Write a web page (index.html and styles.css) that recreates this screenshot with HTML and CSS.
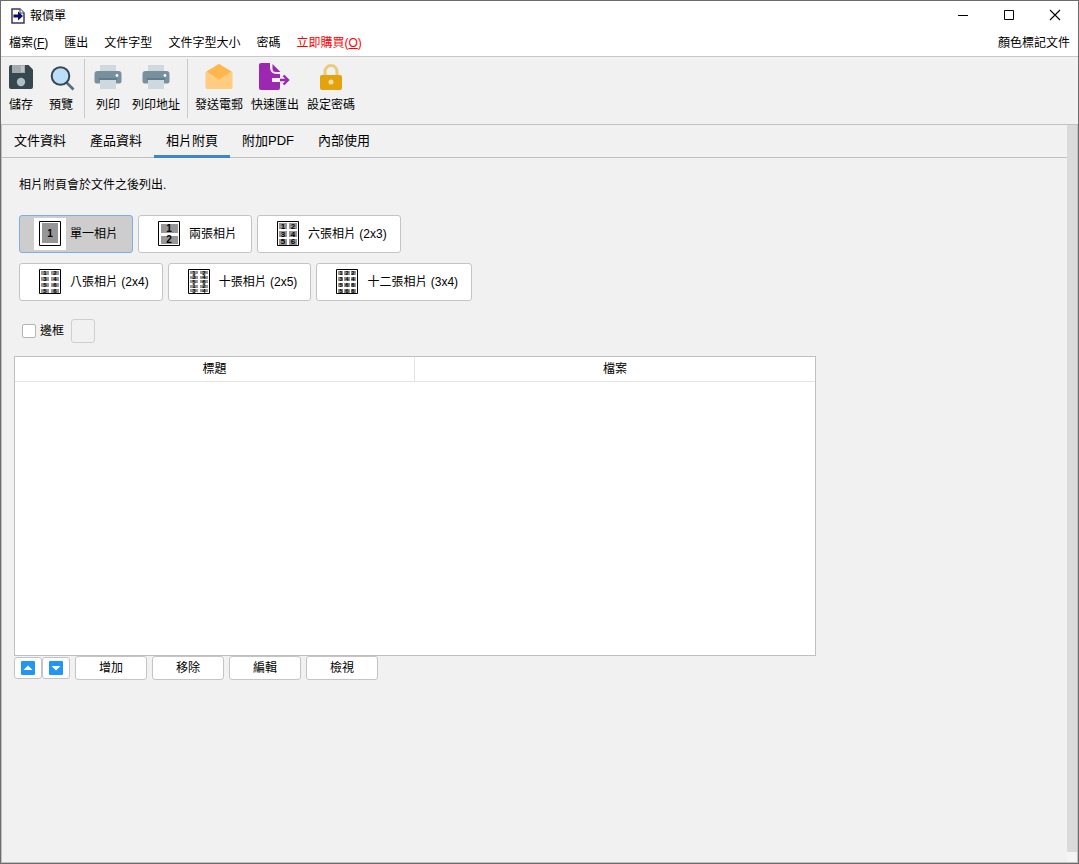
FILE: index.html
```html
<!DOCTYPE html>
<html lang="zh-Hant">
<head>
<meta charset="utf-8">
<title>報價單</title>
<link rel="stylesheet" href="styles.css">
</head>
<body>
<div class="window">
  <header class="titlebar">
    <svg class="app-icon" width="14" height="16" viewBox="0 0 14 16"><path d="M1 1h8l4 4v10H1z" fill="#ffffd8" stroke="#38386c" stroke-width="1.5"/><path d="M9 1v4h4" fill="#fff" stroke="#38386c"/><path d="M2.500 6.500H7V3.500l5 4.500-5 4.500V9.500H2.500z" fill="#0a0a78"/></svg>
    <h1 class="title">報價單</h1>
    <div class="window-controls">
      <button class="control" aria-label="最小化"><svg width="12" height="12" viewBox="0 0 12 12"><path d="M1 6.500h10" stroke="#000"/></svg></button>
      <button class="control" aria-label="最大化"><svg width="12" height="12" viewBox="0 0 12 12"><path d="M1.500 1.500h9v9h-9z" fill="none" stroke="#000"/></svg></button>
      <button class="control" aria-label="關閉"><svg width="12" height="12" viewBox="0 0 12 12"><path d="M1 1l10 10M11 1L1 11" stroke="#000" stroke-width="1.100"/></svg></button>
    </div>
  </header>

  <nav class="menubar">
    <button class="menu">檔案(<u>F</u>)</button>
    <button class="menu">匯出</button>
    <button class="menu">文件字型</button>
    <button class="menu">文件字型大小</button>
    <button class="menu">密碼</button>
    <button class="menu menu-buy">立即購買(<u>O</u>)</button>
    <button class="menu menu-end">顏色標記文件</button>
  </nav>

  <div class="toolbar" role="toolbar">
    <div class="tools tools-file">
      <button class="tool"><svg width="24" height="26" viewBox="0 0 24 26"><path d="M2 1h17.500L24 5.500V23a2 2 0 0 1-2 2H2a2 2 0 0 1-2-2V3a2 2 0 0 1 2-2z" fill="#37474f"/><path d="M3 1h13v8H3z" fill="#a3abb0"/><path d="M12 2h3v6h-3z" fill="#bcc4c8"/><circle cx="12" cy="18" r="4.200" fill="#b0bec5"/></svg>儲存</button>
      <button class="tool"><svg class="lens" width="24" height="26" viewBox="1 0 24 26"><path d="M17 17l8.500 8.500" stroke="#546e7a" stroke-width="2.600"/><circle cx="12.500" cy="12" r="8.800" fill="#bbdefb" stroke="#37474f" stroke-width="2"/></svg>預覽</button>
    </div>
    <div class="tools tools-print">
      <button class="tool"><svg width="28" height="26" viewBox="0 0 28 26"><path d="M6 1h16v7H6z" fill="#cfd8dc"/><path d="M3.500 7h21a3 3 0 0 1 3 3v7.500a2 2 0 0 1-2 2h-23a2 2 0 0 1-2-2V10a3 3 0 0 1 3-3z" fill="#78909c"/><path d="M6 15.500h16V25H6z" fill="#cfd8dc"/><path d="M5 14h18v2H5z" fill="#607d8b"/><circle cx="23" cy="11.500" r="1.400" fill="#e8fcff"/></svg>列印</button>
      <button class="tool"><svg width="28" height="26" viewBox="0 0 28 26"><path d="M6 1h16v7H6z" fill="#cfd8dc"/><path d="M3.500 7h21a3 3 0 0 1 3 3v7.500a2 2 0 0 1-2 2h-23a2 2 0 0 1-2-2V10a3 3 0 0 1 3-3z" fill="#78909c"/><path d="M6 15.500h16V25H6z" fill="#cfd8dc"/><path d="M5 14h18v2H5z" fill="#607d8b"/><circle cx="23" cy="11.500" r="1.400" fill="#e8fcff"/></svg>列印地址</button>
    </div>
    <div class="tools tools-send">
      <button class="tool"><svg width="28" height="26" viewBox="0 0 28 26"><path d="M14 0L27 8a2 2 0 0 1 .500 1.500V23a2 2 0 0 1-2 2h-23a2 2 0 0 1-2-2V9.500A2 2 0 0 1 1 8z" fill="#ffcc80"/><path d="M14 0l12.500 7.500L14 15.500 1.500 7.500z" fill="#ffb74d"/></svg>發送電郵</button>
      <button class="tool"><svg width="32" height="28" viewBox="0 0 32 28"><path d="M2 0h9v5a6 6 0 0 0 6 6h4v4h-8v4h8v6a2 2 0 0 1-2 2H2a2 2 0 0 1-2-2V2a2 2 0 0 1 2-2z" fill="#9c27b0"/><path d="M13.500 1l8 8H17a3.500 3.500 0 0 1-3.500-3.500z" fill="#9c27b0"/><path d="M21 17h8M24.500 12.500L29 17l-4.500 4.500" fill="none" stroke="#9c27b0" stroke-width="2.400"/></svg>快速匯出</button>
      <button class="tool"><svg width="24" height="28" viewBox="0 0 24 28"><path d="M6 13V8.500a6 6 0 0 1 12 0V13" fill="none" stroke="#eacb7a" stroke-width="3"/><rect x="1" y="12" width="22" height="15" rx="2" fill="#e2a30d"/><circle cx="12" cy="19" r="2.500" fill="#ffe0a0"/></svg>設定密碼</button>
    </div>
  </div>

  <main class="pane">
    <div class="page">
      <div class="tabs" role="tablist">
        <button class="tab" role="tab">文件資料</button>
        <button class="tab" role="tab">產品資料</button>
        <button class="tab tab-active" role="tab" aria-selected="true">相片附頁</button>
        <button class="tab" role="tab">附加PDF</button>
        <button class="tab" role="tab">內部使用</button>
      </div>

      <section class="content">
        <p class="note">相片附頁會於文件之後列出.</p>
        <div class="layouts">
          <div class="layout-row">
            <button class="layout layout-selected" aria-pressed="true"><svg class="thumb" viewBox="0 0 32 32"><path class="frame" d="M5.500 3.500h21v24h-21z"/><path class="cell" d="M8 5h16v20H8z"/><text class="digit" x="16" y="19">1</text></svg>單一相片</button>
            <button class="layout"><svg class="thumb" viewBox="0 0 32 32"><path class="frame" d="M5.500 3.500h21v24h-21z"/><path class="cell" d="M8 6h17v9H8zM8 18h17v8H8z"/><text class="digit" x="16" y="14">1</text><text class="digit" x="16" y="25">2</text></svg>兩張相片</button>
            <button class="layout"><svg class="thumb" viewBox="0 0 32 32"><path class="frame" d="M5.500 3.500h21v24h-21z"/><path class="cell" d="M7 5h8v6H7zM17 5h8v6h-8zM7 13h8v6H7zM17 13h8v6h-8zM7 21h8v6H7zM17 21h8v6h-8z"/><text class="digit small" x="11" y="11">1</text><text class="digit small" x="21" y="11">2</text><text class="digit small" x="11" y="19">3</text><text class="digit small" x="21" y="19">4</text><text class="digit small" x="11" y="26">5</text><text class="digit small" x="21" y="26">6</text></svg>六張相片 (2x3)</button>
          </div>
          <div class="layout-row">
            <button class="layout"><svg class="thumb" viewBox="0 0 32 32"><path class="frame" d="M5.500 3.500h21v24h-21z"/><path class="cell" d="M7 5h8v4H7zM17 5h8v4h-8zM7 11h8v4H7zM17 11h8v4h-8zM7 17h8v4H7zM17 17h8v4h-8zM7 23h8v4H7zM17 23h8v4h-8z"/><g class="digit tiny"><text x="11" y="9">1</text><text x="21" y="9">2</text><text x="11" y="15">3</text><text x="21" y="15">4</text><text x="11" y="21">5</text><text x="21" y="21">6</text><text x="11" y="27">5</text><text x="21" y="27">6</text></g></svg>八張相片 (2x4)</button>
            <button class="layout"><svg class="thumb" viewBox="0 0 32 32"><path class="frame" d="M5.500 3.500h21v24h-21z"/><path class="cell" d="M7 5h8v3H7zM17 5h8v3h-8zM7 10h8v3H7zM17 10h8v3h-8zM7 14h8v3H7zM17 14h8v3h-8zM7 19h8v3H7zM17 19h8v3h-8zM7 23h8v3H7zM17 23h8v3h-8z"/><g class="digit tiny"><text x="11" y="9">1</text><text x="21" y="9">2</text><text x="11" y="13">3</text><text x="21" y="13">4</text><text x="11" y="18">5</text><text x="21" y="18">6</text><text x="11" y="22">1</text><text x="21" y="22">2</text><text x="11" y="27">3</text><text x="21" y="27">4</text></g></svg>十張相片 (2x5)</button>
            <button class="layout"><svg class="thumb" viewBox="0 0 32 32"><path class="frame" d="M5.500 3.500h21v24h-21z"/><path class="cell" d="M7 5h5v4H7zM13 5h6v4h-6zM20 5h5v4h-5zM7 11h5v4H7zM13 11h6v4h-6zM20 11h5v4h-5zM7 17h5v4H7zM13 17h6v4h-6zM20 17h5v4h-5zM7 23h5v4H7zM13 23h6v4h-6zM20 23h5v4h-5z"/><g class="digit tiny"><text x="10" y="9">1</text><text x="16" y="9">2</text><text x="22" y="9">2</text><text x="10" y="15">3</text><text x="16" y="15">4</text><text x="22" y="15">4</text><text x="10" y="21">5</text><text x="16" y="21">6</text><text x="22" y="21">6</text><text x="10" y="27">5</text><text x="16" y="27">6</text><text x="22" y="27">6</text></g></svg>十二張相片 (3x4)</button>
          </div>
        </div>

        <div class="border-option">
          <input class="check" type="checkbox" id="border"><label for="border">邊框</label>
          <button class="swatch" disabled aria-label="邊框顏色"></button>
        </div>

        <div class="grid">
          <table class="photos">
            <thead><tr><th>標題</th><th>檔案</th></tr></thead>
            <tbody></tbody>
          </table>
        </div>

        <div class="actions">
          <div class="movers">
            <button class="mover" aria-label="上移"><svg width="14" height="14" viewBox="0 0 14 14"><rect width="14" height="14" rx="1" fill="#2196f3"/><path d="M2.500 9L7 4.500 11.500 9z" fill="#fff"/></svg></button>
            <button class="mover" aria-label="下移"><svg width="14" height="14" viewBox="0 0 14 14"><rect width="14" height="14" rx="1" fill="#2196f3"/><path d="M2.500 5L7 9.500 11.500 5z" fill="#fff"/></svg></button>
          </div>
          <button class="action">增加</button>
          <button class="action">移除</button>
          <button class="action">編輯</button>
          <button class="action">檢視</button>
        </div>
      </section>
    </div>
    <div class="scroll-track"><div class="scroll-thumb"></div></div>
  </main>
</div>
</body>
</html>
```

FILE: styles.css
```css
* { box-sizing: border-box; }

body {
  margin: 0;
  background: #f1f1f1;
  color: #000;
  font: 12px/16px "Liberation Sans", "Noto Sans CJK TC", sans-serif;
}

button {
  margin: 0;
  padding: 0;
  border: 0;
  background: none;
  color: inherit;
  font: inherit;
  white-space: nowrap;
}

svg { display: block; flex: none; }

.window {
  display: flex;
  flex-direction: column;
  min-height: 100vh;
  border: 1px solid #6b6b6b;
}

/* Title bar */
.titlebar {
  display: flex;
  align-items: center;
  height: 29px;
  padding-left: 10px;
  background: #fff;
}
.title { margin: 0 0 0 5px; font-size: 12px; font-weight: 400; }
.window-controls { display: flex; align-self: start; margin-left: auto; }
.control { display: grid; place-items: center; width: 46px; height: 28px; }

/* Menu bar */
.menubar {
  display: flex;
  gap: 16px;
  height: 27px;
  padding: 0 8px;
  border-bottom: 1px solid #c8c8c8;
  background: #fff;
}
.menu-buy { color: #f00; }
.menu-end { margin-left: auto; }

/* Toolbar */
.toolbar { display: flex; height: 67px; padding: 2px 0 6px; }
.tools { display: flex; }
.tools + .tools { border-left: 1px solid #c8c8c8; }
.tools-file { gap: 16px; padding: 0 11px 0 8px; }
.tools-print { gap: 10px; padding: 0 7px 0 9px; }
.tools-send { gap: 8px; padding-left: 7px; }
.tool {
  display: grid;
  grid-template-rows: 28px 16px;
  row-gap: 6px;
  place-items: center;
  align-content: start;
  padding-top: 4px;
}
.lens { overflow: visible; }

/* Main pane */
.pane { display: flex; flex: 1; border: 1px solid #c0c0c0; }
.page { flex: 1; min-width: 0; }
.scroll-track { display: flex; width: 10px; padding-bottom: 10px; background: #f5f5f5; }
.scroll-thumb { flex: 1; background: #dadada; }

.tabs { display: flex; height: 33px; border-bottom: 1px solid #c0c0c0; }
.tab {
  height: 33px;
  padding: 2px 12px 0;
  border-bottom: 3px solid transparent;
  font-size: 13px;
}
.tab-active { border-bottom-color: #4083c9; }

.content { padding: 19px 12px; }
.note { margin: 0 0 22px 5px; }

/* Photo layout buttons */
.layouts { display: grid; gap: 10px; margin-left: 5px; }
.layout-row { display: flex; gap: 5px; }
.layout {
  display: flex;
  align-items: center;
  gap: 4px;
  min-width: 114px;
  height: 38px;
  padding: 0 13px 0 14px;
  border: 1px solid #c4c4c4;
  border-radius: 3px;
  background: #fff;
}
.layout-selected { border-color: #7eaee6; background: #cdcdcd; }
.thumb { width: 32px; height: 32px; background: #fff; }
.frame { fill: #fff; stroke: #000; }
.cell { fill: #969696; }
.digit { font-size: 10px; font-weight: 700; text-anchor: middle; }
.small { font-size: 8px; }
.tiny { font-size: 6px; }

/* Border option */
.border-option { display: flex; align-items: center; gap: 4px; margin: 18px 0 13px 8px; }
.check {
  appearance: none;
  width: 14px;
  height: 14px;
  margin: 0;
  border: 1px solid #b4b4b4;
  border-radius: 2px;
  background: #fff;
}
.swatch {
  width: 24px;
  height: 24px;
  margin-left: 3px;
  border: 1px solid #cfcfcf;
  border-radius: 3px;
}

/* Photo table */
.grid { max-width: 802px; height: 300px; border: 1px solid #c0c0c0; background: #fff; }
.photos { width: 100%; table-layout: fixed; border-spacing: 0; }
.photos th { height: 25px; padding: 0; border-bottom: 1px solid #e4e4e4; font-weight: 400; }
.photos th:first-child { border-right: 1px solid #e4e4e4; }

/* Row actions */
.actions { display: flex; align-items: center; gap: 5px; }
.movers { display: flex; }
.mover, .action { border: 1px solid #c4c4c4; border-radius: 3px; background: #fff; }
.mover { display: grid; place-items: center; width: 28px; height: 22px; }
.action { width: 72px; height: 24px; }
```
